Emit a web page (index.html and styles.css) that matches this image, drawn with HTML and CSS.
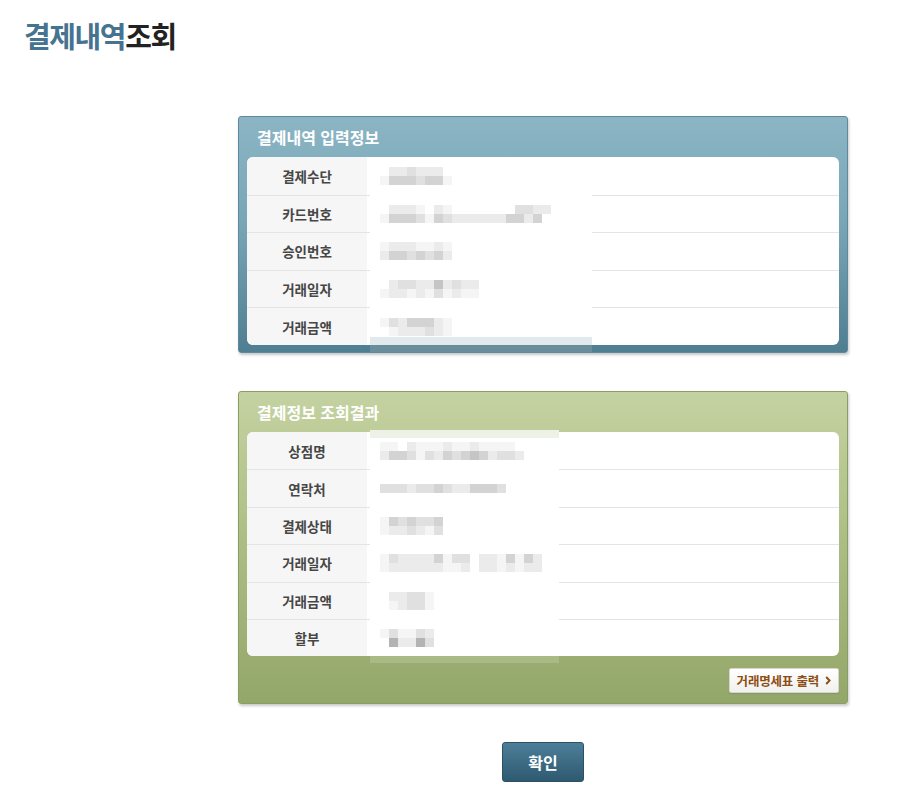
FILE: index.html
```html
<!DOCTYPE html>
<html lang="ko">
<head>
<meta charset="utf-8">
<title>결제내역조회</title>
<link rel="stylesheet" href="styles.css">
</head>
<body>
<div class="page">
  <h1 class="title"><span class="hl">결제내역</span>조회</h1>

  <section class="panel blue">
    <h2 class="panel-title">결제내역 입력정보</h2>
    <div class="card">
      <div class="row"><div class="label">결제수단</div><div class="value"><span class="mosaic"><i class="off1"><b class="c1"></b><b class="c1"></b><b class="c2"></b><b class="c1"></b><b class="c1"></b><b class="c1"></b></i><i><b class="c0"></b><b class="c3"></b><b class="c3"></b><b class="c3"></b><b class="c2"></b><b class="c3"></b><b class="c3"></b><b class="c0"></b></i></span></div></div>
      <div class="row"><div class="label">카드번호</div><div class="value"><span class="mosaic"><i class="off1"><b class="c1"></b><b class="c1"></b><b class="c1"></b><b class="c0"></b><b class="cx"></b><b class="c1"></b><b class="c0"></b><b class="cx"></b><b class="cx"></b><b class="cx"></b><b class="cx"></b><b class="cx"></b><b class="cx"></b><b class="cx"></b><b class="c2"></b><b class="c2"></b><b class="c1"></b><b class="c1"></b></i><i><b class="c0"></b><b class="c3"></b><b class="c3"></b><b class="c3"></b><b class="c2"></b><b class="c0"></b><b class="c3"></b><b class="c2"></b><b class="c1"></b><b class="c1"></b><b class="c1"></b><b class="c1"></b><b class="c1"></b><b class="c1"></b><b class="c3"></b><b class="c3"></b><b class="c1"></b><b class="c3"></b></i></span></div></div>
      <div class="row"><div class="label">승인번호</div><div class="value"><span class="mosaic"><i><b class="c0"></b><b class="c1"></b><b class="c1"></b><b class="c1"></b><b class="c0"></b><b class="c0"></b><b class="c1"></b><b class="c0"></b></i><i><b class="c1"></b><b class="c3"></b><b class="c3"></b><b class="c2"></b><b class="c3"></b><b class="c2"></b><b class="c3"></b><b class="c1"></b></i></span></div></div>
      <div class="row"><div class="label">거래일자</div><div class="value"><span class="mosaic"><i class="off1"><b class="c1"></b><b class="c2"></b><b class="c2"></b><b class="c1"></b><b class="c1"></b><b class="c4"></b><b class="c1"></b><b class="c2"></b><b class="c1"></b><b class="c1"></b></i><i><b class="c0"></b><b class="c1"></b><b class="c1"></b><b class="c0"></b><b class="c1"></b><b class="c0"></b><b class="c2"></b><b class="c0"></b><b class="c1"></b><b class="c0"></b><b class="c0"></b></i></span></div></div>
      <div class="row"><div class="label">거래금액</div><div class="value"><span class="mosaic"><i><b class="c0"></b><b class="c2"></b><b class="c1"></b><b class="c3"></b><b class="c3"></b><b class="c3"></b><b class="c1"></b><b class="c0"></b></i><i><b class="cx"></b><b class="c0"></b><b class="c1"></b><b class="c1"></b><b class="c1"></b><b class="c2"></b><b class="c1"></b><b class="c0"></b></i></span></div></div>
    </div>
    <div class="redact blue-body"></div>
    <div class="redact blue-tail"></div>
  </section>

  <section class="panel green">
    <h2 class="panel-title">결제정보 조회결과</h2>
    <div class="card">
      <div class="row"><div class="label">상점명</div><div class="value"><span class="mosaic"><i><b class="c0"></b><b class="c0"></b><b class="cx"></b><b class="c1"></b><b class="c0"></b><b class="c0"></b><b class="c0"></b><b class="c1"></b><b class="c0"></b><b class="c0"></b><b class="c1"></b><b class="c0"></b><b class="c0"></b><b class="c0"></b><b class="c0"></b></i><i><b class="c1"></b><b class="c3"></b><b class="c3"></b><b class="c2"></b><b class="c0"></b><b class="c2"></b><b class="c1"></b><b class="c3"></b><b class="c2"></b><b class="c3"></b><b class="c4"></b><b class="c3"></b><b class="c1"></b><b class="c2"></b><b class="c2"></b><b class="c1"></b></i></span></div></div>
      <div class="row"><div class="label">연락처</div><div class="value"><span class="mosaic single"><i><b class="c2"></b><b class="c2"></b><b class="c2"></b><b class="c1"></b><b class="c2"></b><b class="c2"></b><b class="c3"></b><b class="c2"></b><b class="c1"></b><b class="c1"></b><b class="c3"></b><b class="c3"></b><b class="c3"></b><b class="c2"></b></i></span></div></div>
      <div class="row"><div class="label">결제상태</div><div class="value"><span class="mosaic"><i><b class="c0"></b><b class="c3"></b><b class="c2"></b><b class="c3"></b><b class="c2"></b><b class="c2"></b><b class="c3"></b></i><i><b class="c0"></b><b class="c1"></b><b class="c1"></b><b class="c2"></b><b class="c1"></b><b class="c0"></b><b class="c2"></b></i></span></div></div>
      <div class="row"><div class="label">거래일자</div><div class="value"><span class="mosaic"><i><b class="c0"></b><b class="c2"></b><b class="c1"></b><b class="c1"></b><b class="c1"></b><b class="c1"></b><b class="c3"></b><b class="c0"></b><b class="c2"></b><b class="c2"></b><b class="cx"></b><b class="c1"></b><b class="c1"></b><b class="c0"></b><b class="c3"></b><b class="c0"></b><b class="c3"></b><b class="c1"></b></i><i><b class="c0"></b><b class="c1"></b><b class="c1"></b><b class="c1"></b><b class="c1"></b><b class="c1"></b><b class="c1"></b><b class="c0"></b><b class="c0"></b><b class="c1"></b><b class="cx"></b><b class="c1"></b><b class="c1"></b><b class="c0"></b><b class="c1"></b><b class="c0"></b><b class="c1"></b><b class="c1"></b></i></span></div></div>
      <div class="row"><div class="label">거래금액</div><div class="value"><span class="mosaic"><i class="off1"><b class="c1"></b><b class="c1"></b><b class="c2"></b><b class="c2"></b><b class="c0"></b></i><i class="off1"><b class="c0"></b><b class="c1"></b><b class="c2"></b><b class="c2"></b><b class="c0"></b></i></span></div></div>
      <div class="row"><div class="label">할부</div><div class="value"><span class="mosaic"><i><b class="c0"></b><b class="c2"></b><b class="c0"></b><b class="c0"></b><b class="c2"></b><b class="c1"></b></i><i><b class="cx"></b><b class="c5"></b><b class="c1"></b><b class="c1"></b><b class="c5"></b><b class="c2"></b></i></span></div></div>
    </div>
    <div class="actions">
      <button class="print" type="button">거래명세표 출력<svg class="chev" viewBox="0 0 6 9" width="6" height="9" aria-hidden="true"><polyline points="1.2,1 4.6,4.5 1.2,8" fill="none" stroke="currentColor" stroke-width="1.9"/></svg></button>
    </div>
    <div class="redact green-head"></div>
    <div class="redact green-body"></div>
    <div class="redact green-tail"></div>
  </section>

  <div class="confirm-wrap">
    <button class="confirm" type="button">확인</button>
  </div>
</div>
</body>
</html>
```

FILE: styles.css
```css
* { box-sizing: border-box; }

body {
  margin: 0;
  background: #fff;
  font-family: "Noto Sans CJK KR", "Noto Sans", sans-serif;
  color: #333;
}

.page {
  padding-top: 16px;
  width: 916px;
}

.title {
  margin: 0 0 0 24px;
  font-size: 29px;
  line-height: 38px;
  font-weight: 700;
  color: #222;
  letter-spacing: -1.4px;
}
.title .hl { color: #467390; }

.panel {
  position: relative;
  width: 610px;
  margin-left: 238px;
  border: 1px solid;
  border-radius: 3px;
  box-shadow: 1px 2px 3px rgba(0, 0, 0, 0.22);
  padding: 0 8px 7px;
}
.panel.blue {
  margin-top: 62px;
  border-color: #5f8a9c;
  background: linear-gradient(#8bb5c4 0%, #79a6b7 45%, #4f7e92 100%);
}
.panel.green {
  margin-top: 38px;
  padding-bottom: 10px;
  border-color: #8b9d62;
  background: linear-gradient(#c4d2a1 0%, #aebf86 45%, #94a76a 100%);
}

.panel-title {
  margin: 0;
  height: 40px;
  line-height: 40px;
  padding-left: 10px;
  font-size: 16px;
  font-weight: 700;
  color: #fff;
  letter-spacing: 0;
}

.card {
  background: #fff;
  border-radius: 6px;
  overflow: hidden;
}

.row {
  display: flex;
  align-items: center;
  height: 37.6px;
}
.green .row { height: 37.4px; }
.row + .row { border-top: 1px solid #e4e4e4; }

.label {
  width: 120px;
  align-self: stretch;
  display: flex;
  align-items: center;
  justify-content: center;
  background: #f6f6f6;
  font-size: 13.5px;
  font-weight: 700;
  color: #464646;
}

.value {
  padding-left: 13px;
  position: relative;
  z-index: 2;
}

.mosaic {
  display: flex;
  flex-direction: column;
}
.mosaic i {
  display: flex;
  height: 9px;
}
.mosaic i.off1 { padding-left: 9px; }
.mosaic b {
  display: block;
  width: 9px;
  height: 9px;
}
.c0 { background: #f5f5f5; }
.c1 { background: #ebebeb; }
.c2 { background: #e0e0e0; }
.c3 { background: #d3d3d3; }
.c4 { background: #c5c5c5; }
.c5 { background: #b3b3b3; }
.cx { background: transparent; }

.redact {
  position: absolute;
  z-index: 1;
  left: 131px;
}
.blue-body {
  top: 40px;
  width: 222px;
  height: 188px;
  background: linear-gradient(#fff 0, #fff 180px, #e1e9ec 180px);
}
.blue-tail {
  top: 228px;
  width: 222px;
  height: 7px;
  background: #6a8d9c;
}
.green-head {
  top: 38px;
  width: 189px;
  height: 8px;
  background: #eef2e6;
}
.green-body {
  top: 46px;
  width: 189px;
  height: 218px;
  background: #fff;
}
.green-tail {
  top: 264px;
  width: 189px;
  height: 7px;
  background: #a9ba86;
}

.actions {
  display: flex;
  justify-content: flex-end;
  margin-top: 12px;
}

.print {
  display: flex;
  align-items: center;
  gap: 6px;
  height: 25px;
  padding: 0 7px;
  border: 1px solid #d6d6cc;
  border-radius: 2px;
  background: linear-gradient(#ffffff, #f0f0ee);
  font-family: inherit;
  font-size: 12.5px;
  font-weight: 700;
  color: #8c4d16;
  letter-spacing: -0.2px;
  box-shadow: 0 1px 1px rgba(0, 0, 0, 0.1);
}
.chev { display: block; }

.confirm-wrap {
  display: flex;
  justify-content: center;
  margin-left: 238px;
  width: 610px;
  margin-top: 38px;
}

.confirm {
  width: 82px;
  height: 40px;
  border: 1px solid #2c5064;
  border-radius: 3px;
  background: linear-gradient(#4d7e98, #2e5971);
  color: #fff;
  font-family: inherit;
  font-size: 16px;
  font-weight: 700;
}
```
